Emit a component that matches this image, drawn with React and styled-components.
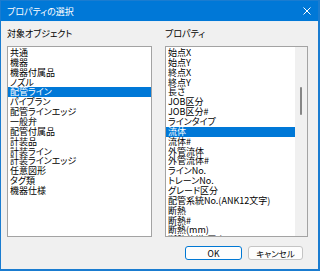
import React from 'react'
import styled, { createGlobalStyle } from 'styled-components'

const objects = [
    '共通', '機器', '機器付属品', 'ノズル', '配管ライン', 'パイプラン', '配管ラインエッジ',
    '一般弁', '配管付属品', '計装品', '計装ライン', '計装ラインエッジ', '任意図形', 'タグ類', '機器仕様',
]

const properties = [
    '始点X', '始点Y', '終点X', '終点Y', '長さ', 'JOB区分', 'JOB区分#', 'ラインタイプ', '流体',
    '流体#', '外管流体', '外管流体#', 'ラインNo.', 'トレーンNo.', 'グレード区分',
    '配管系統No.(ANK12文字)', '断熱', '断熱#', '断熱(mm)', '断熱仕様(厚さ)', '保温材',
]

function App() {
    return (
        <>
            <GlobalStyle />
            <Window>
                <TitleBar>
                    <Title>プロパティの選択</Title>
                    <CloseButton>
                        <svg width="8" height="8" viewBox="0 0 8 8">
                            <path d="M0.5 0.5 L7.5 7.5 M7.5 0.5 L0.5 7.5" stroke="#fff" strokeWidth="1" />
                        </svg>
                    </CloseButton>
                </TitleBar>
                <Body>
                    <Columns>
                        <Column>
                            <Label>対象オブジェクト</Label>
                            <ListBox>
                                <Items>
                                    {objects.map((name, i) => (
                                        <Item key={name} selected={i === 4}>{name}</Item>
                                    ))}
                                </Items>
                            </ListBox>
                        </Column>
                        <Column>
                            <Label>プロパティ</Label>
                            <ListBox>
                                <Items>
                                    {properties.map((name, i) => (
                                        <Item key={name} selected={i === 8}>{name}</Item>
                                    ))}
                                </Items>
                                <ScrollTrack>
                                    <ScrollThumb />
                                </ScrollTrack>
                            </ListBox>
                        </Column>
                    </Columns>
                    <ButtonRow>
                        <Button primary>OK</Button>
                        <Button>キャンセル</Button>
                    </ButtonRow>
                </Body>
            </Window>
        </>
    )
}

export default App


const GlobalStyle = createGlobalStyle`
    body {
        margin: 0;
        background: #f0f0f0;
        font-family: "Noto Sans CJK JP", "Noto Sans", sans-serif;
        font-feature-settings: "palt";
    }
    * { box-sizing: border-box; }
`

const Window = styled.div`
    width: 320px;
    height: 271px;
    display: flex;
    flex-direction: column;
    background: #f0f0f0;
    border: 1px solid #1a7cd0;
    border-right-width: 2px;
    border-bottom-width: 2px;
`

const TitleBar = styled.div`
    height: 21px;
    background: #0078d7;
    display: flex;
    align-items: center;
    justify-content: space-between;
    padding: 0 7px 0 6px;
    border-bottom: 1px solid #e9eef3;
`

const Title = styled.div`
    color: #fff;
    font-size: 9px;
`

const CloseButton = styled.div`
    display: flex;
    align-items: center;
`

const Body = styled.div`
    flex: 1;
    display: flex;
    flex-direction: column;
    padding: 6px 10px 0 6px;
`

const Columns = styled.div`
    display: grid;
    grid-template-columns: 145px 143px;
    column-gap: 13px;
`

const Column = styled.div`
    display: flex;
    flex-direction: column;
`

const Label = styled.div`
    font-size: 9px;
    line-height: 12px;
    color: #000;
    margin-bottom: 6px;
`

const ListBox = styled.div`
    height: 191px;
    border: 1px solid #a3a3a3;
    background: #fff;
    display: flex;
    overflow: hidden;
    padding-top: 1px;
`

const Items = styled.div`
    flex: 1;
    display: flex;
    flex-direction: column;
`

const Item = styled.div`
    height: 9.87px;
    line-height: 9.87px;
    font-size: 9px;
    padding-left: 2px;
    white-space: nowrap;
    color: ${(p) => (p.selected ? '#fff' : '#000')};
    background: ${(p) => (p.selected ? '#0078d7' : 'transparent')};
`

const ScrollTrack = styled.div`
    width: 12px;
    margin-top: -1px;
    background: #f0f0f0;
    display: flex;
    justify-content: center;
    padding-top: 40px;
`

const ScrollThumb = styled.div`
    width: 2px;
    height: 28px;
    border-radius: 1px;
    background: #858585;
`

const ButtonRow = styled.div`
    display: flex;
    justify-content: flex-end;
    gap: 6px;
    margin-top: 9px;
    padding-right: 5px;
`

const Button = styled.div`
    width: ${(p) => (p.primary ? '57px' : '55px')};
    height: 14px;
    display: flex;
    align-items: center;
    justify-content: center;
    font-size: 8.5px;
    color: #000;
    background: #fdfdfd;
    border: 1px solid ${(p) => (p.primary ? '#0078d4' : '#c4c4c4')};
    border-radius: 3px;
`
